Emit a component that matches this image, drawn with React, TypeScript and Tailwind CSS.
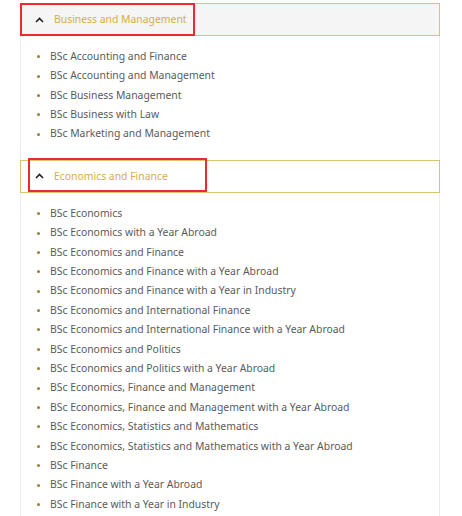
const business = [
  "BSc Accounting and Finance",
  "BSc Accounting and Management",
  "BSc Business Management",
  "BSc Business with Law",
  "BSc Marketing and Management",
];

const economics = [
  "BSc Economics",
  "BSc Economics with a Year Abroad",
  "BSc Economics and Finance",
  "BSc Economics and Finance with a Year Abroad",
  "BSc Economics and Finance with a Year in Industry",
  "BSc Economics and International Finance",
  "BSc Economics and International Finance with a Year Abroad",
  "BSc Economics and Politics",
  "BSc Economics and Politics with a Year Abroad",
  "BSc Economics, Finance and Management",
  "BSc Economics, Finance and Management with a Year Abroad",
  "BSc Economics, Statistics and Mathematics",
  "BSc Economics, Statistics and Mathematics with a Year Abroad",
  "BSc Finance",
  "BSc Finance with a Year Abroad",
  "BSc Finance with a Year in Industry",
];

function Chevron() {
  return (
    <svg width="9" height="6" viewBox="0 0 9 6" className="shrink-0">
      <path d="M1 5 L4.5 1.5 L8 5" fill="none" stroke="#222" strokeWidth="1.6" />
    </svg>
  );
}

function Header({ title, shaded }: { title: string; shaded?: boolean }) {
  return (
    <div
      className={`flex h-[33px] items-center gap-[10px] border border-[#dcc36e] pl-[14px] ${
        shaded ? "bg-[#f5f5f5]" : "bg-white"
      }`}
    >
      <Chevron />
      <span className="text-[10.4px] text-[#d6ad45]">{title}</span>
    </div>
  );
}

function List({ items, pb }: { items: string[]; pb: string }) {
  return (
    <ul className={`border-x border-[#ececec] pt-[11px] ${pb}`}>
      {items.map((t) => (
        <li key={t} className="flex h-[19.4px] items-center pl-[16px]">
          <span className="mr-[10px] h-[3px] w-[3px] rounded-full bg-[#9c7e2c]" />
          <span className="text-[10.4px] text-[#5a5a5a]">{t}</span>
        </li>
      ))}
    </ul>
  );
}

export default function App() {
  return (
    <div
      className="relative h-[516px] overflow-hidden bg-white pl-[20px] pt-[3px]"
      style={{ fontFamily: '"Noto Sans", "Open Sans", sans-serif' }}
    >
      <div className="w-[420px]">
        <Header title="Business and Management" shaded />
        <List items={business} pb="pb-[16px]" />
        <Header title="Economics and Finance" />
        <List items={economics} pb="pb-[10px]" />
      </div>
      <div className="absolute left-[20px] top-[3px] h-[33px] w-[175px] border-2 border-[#f02a2a]" />
      <div className="absolute left-[28px] top-[158px] h-[34px] w-[179px] border-2 border-[#f02a2a]" />
    </div>
  );
}
